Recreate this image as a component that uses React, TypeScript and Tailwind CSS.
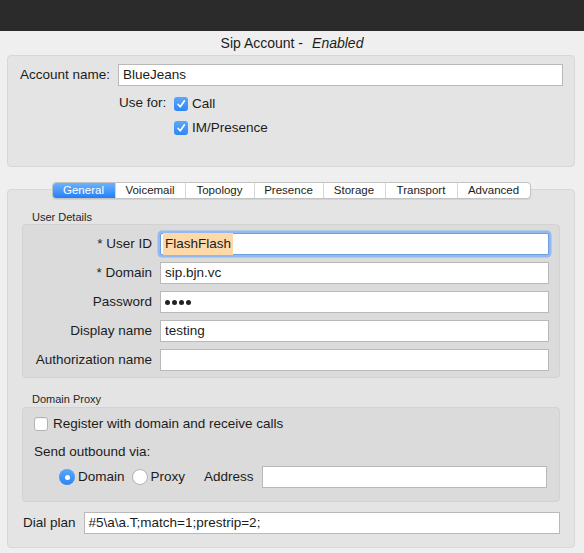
import React from "react";

const tabs = [
  { label: "General", w: "w-[62px]" },
  { label: "Voicemail", w: "w-[70px]" },
  { label: "Topology", w: "w-[69px]" },
  { label: "Presence", w: "w-[69px]" },
  { label: "Storage", w: "w-[62px]" },
  { label: "Transport", w: "w-[72px]" },
  { label: "Advanced", w: "w-[73px]" },
];

function Check({ checked }: { checked: boolean }) {
  if (!checked) {
    return <span className="block h-[14px] w-[14px] shrink-0 rounded-[3px] border border-[#b3b3b3] bg-white shadow-[inset_0_1px_0_#f4f4f4]" />;
  }
  return (
    <span className="flex h-[14px] w-[14px] shrink-0 items-center justify-center rounded-[3px] bg-gradient-to-b from-[#5aa9fb] to-[#2e86f4]">
      <svg width="12" height="12" viewBox="0 0 12 12">
        <path d="M3 6.3 L5.2 8.8 L9.3 3" fill="none" stroke="white" strokeWidth="1.7" strokeLinecap="round" strokeLinejoin="round" />
      </svg>
    </span>
  );
}

function Radio({ on }: { on: boolean }) {
  if (on) {
    return (
      <span className="flex h-[16px] w-[16px] shrink-0 items-center justify-center rounded-full bg-gradient-to-b from-[#58a8fb] to-[#2d85f4]">
        <span className="block h-[5px] w-[5px] rounded-full bg-white" />
      </span>
    );
  }
  return <span className="block h-[16px] w-[16px] shrink-0 rounded-full border border-[#b3b3b3] bg-white" />;
}

function Field({ children, className = "" }: { children?: React.ReactNode; className?: string }) {
  return (
    <div className={"flex h-[22px] items-center border border-[#b9b9b9] bg-white pl-[4px] " + className}>
      {children}
    </div>
  );
}

export default function App() {
  const rows = [
    { label: "* User ID", value: "FlashFlash" },
    { label: "* Domain", value: "sip.bjn.vc" },
    { label: "Password", value: "pw" },
    { label: "Display name", value: "testing" },
    { label: "Authorization name", value: "" },
  ];

  return (
    <div className="h-[553px] w-[584px] overflow-hidden bg-[#efefef] font-['Liberation_Sans',Arial,sans-serif] text-[13.5px] leading-none text-[#1c1c1c]">
      <div className="h-[31px] bg-[#2b2b2b]" />

      <div className="flex h-[24px] items-center justify-center text-[14px]">
        <span>Sip Account -</span>
        <i className="ml-[9px]">Enabled</i>
      </div>

      <section className="ml-[7px] mr-[9px] h-[112px] rounded-[4px] border border-[#d7d7d7] bg-[#e4e4e4] pt-[8px]">
        <div className="flex items-center">
          <span className="w-[102px] text-right">Account name:</span>
          <Field className="ml-[8px] mr-[11px] flex-1">BlueJeans</Field>
        </div>
        <div className="mt-[5px] flex pl-[111px]">
          <span className="mt-[5px] w-[55px]">Use for:</span>
          <div className="flex flex-col">
            <label className="flex h-[24px] items-center gap-[4px] pt-[1px]">
              <Check checked />
              <span>Call</span>
            </label>
            <label className="flex h-[24px] items-center gap-[4px] pt-[1px]">
              <Check checked />
              <span>IM/Presence</span>
            </label>
          </div>
        </div>
      </section>

      <div className="relative z-10 ml-[7px] mr-[9px] mt-[15px] flex justify-center">
        <div className="flex h-[17px] overflow-hidden rounded-[4px] border border-[#c3c3c3] bg-white text-[11.5px] shadow-[0_1px_1px_rgba(0,0,0,0.08)]">
          {tabs.map((t, i) => (
            <div
              key={t.label}
              className={
                "flex items-center justify-center " +
                t.w +
                (i === 0
                  ? " bg-gradient-to-b from-[#6db2fb] to-[#1f7ff8] text-white"
                  : " border-l border-[#d6d6d6] text-[#1c1c1c]")
              }
            >
              {t.label}
            </div>
          ))}
        </div>
      </div>

      <section className="-mt-[10px] ml-[7px] mr-[9px] h-[359px] rounded-[4px] border border-[#d7d7d7] bg-[#e4e4e4] pt-[20px]">
        <div className="flex h-[14px] items-center pl-[24px] text-[11px] text-[#262626]">User Details</div>
        <div className="mx-[14px] rounded-[4px] border border-[#d2d2d2] bg-[#dbdbdb] pb-[6px] pt-[8px]">
          <div className="flex flex-col gap-[7px]">
            {rows.map((r, i) => (
              <div key={r.label} className="flex items-center">
                <span className="w-[129px] text-right">{r.label}</span>
                {i === 0 ? (
                  <div className="ml-[8px] mr-[10px] flex h-[22px] flex-1 items-center rounded-[2px] border border-[#6d9ee0] bg-white pl-[2px] shadow-[0_0_0_2.5px_#93baf0]">
                    <span className="bg-[#fdd9aa] px-[2px] py-[4px]">FlashFlash</span>
                  </div>
                ) : i === 2 ? (
                  <Field className="ml-[8px] mr-[10px] flex-1">
                    <span className="flex gap-[2px] pt-[1px]">
                      <span className="block h-[5px] w-[5px] rounded-full bg-[#222]" />
                      <span className="block h-[5px] w-[5px] rounded-full bg-[#222]" />
                      <span className="block h-[5px] w-[5px] rounded-full bg-[#222]" />
                      <span className="block h-[5px] w-[5px] rounded-full bg-[#222]" />
                    </span>
                  </Field>
                ) : (
                  <Field className="ml-[8px] mr-[10px] flex-1">{r.value}</Field>
                )}
              </div>
            ))}
          </div>
        </div>

        <div className="mt-[14px] flex h-[14px] items-center pl-[24px] text-[11px] text-[#262626]">Domain Proxy</div>
        <div className="mx-[14px] mt-[1px] h-[95px] rounded-[4px] border border-[#d2d2d2] bg-[#dbdbdb] pt-[6px]">
          <label className="flex h-[20px] items-center gap-[5px] pl-[11px]">
            <Check checked={false} />
            <span>Register with domain and receive calls</span>
          </label>
          <div className="mt-[8px] flex h-[20px] items-center pl-[11px]">Send outbound via:</div>
          <div className="mt-[4px] flex h-[22px] items-center pl-[36px]">
            <Radio on />
            <span className="ml-[3px]">Domain</span>
            <span className="ml-[7px]">
              <Radio on={false} />
            </span>
            <span className="ml-[3px]">Proxy</span>
            <span className="ml-[19px]">Address</span>
            <Field className="ml-[8px] mr-[12px] h-[21px] flex-1" />
          </div>
        </div>

        <div className="mt-[10px] flex items-center pl-[15px]">
          <span>Dial plan</span>
          <Field className="ml-[8px] mr-[14px] flex-1">#5\a\a.T;match=1;prestrip=2;</Field>
        </div>
      </section>
    </div>
  );
}
